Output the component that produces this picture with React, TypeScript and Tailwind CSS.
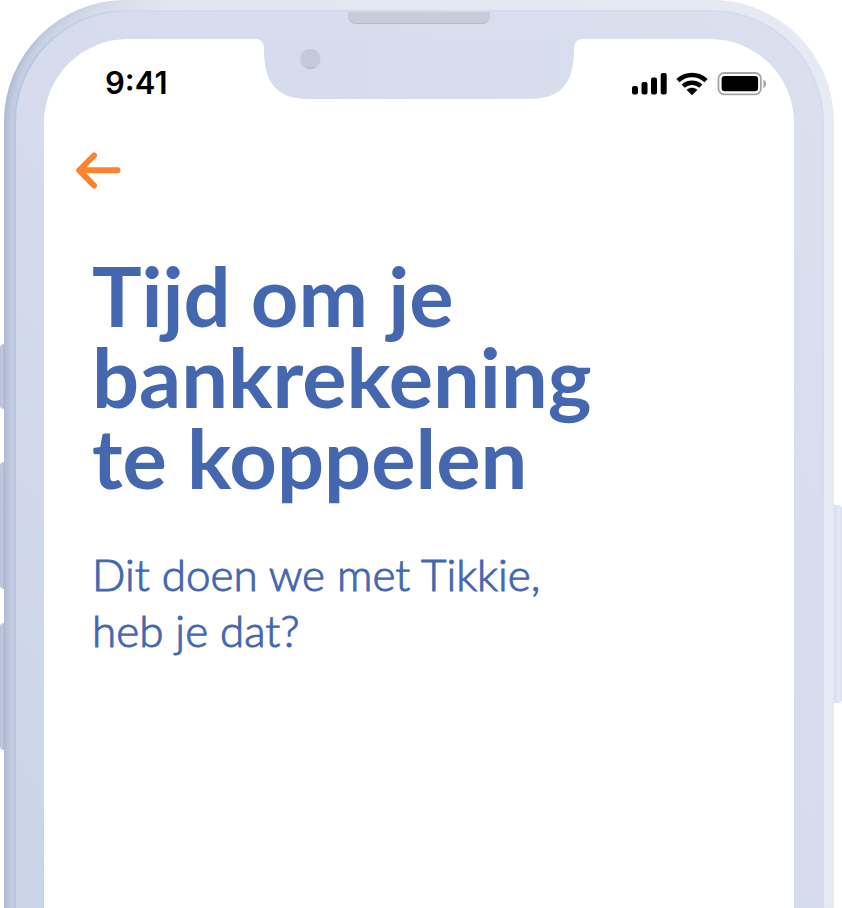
function StatusBar() {
  return (
    <div className="grid grid-cols-[1fr_322px_1fr] items-start">
      <span className="mt-7 pl-[61px] font-['Inter',sans-serif] text-[31px] leading-8 font-semibold text-black">
        9:41
      </span>
      <Notch />
      <div className="mt-[33px] flex items-center justify-end gap-2 pr-7">
        <SignalIcon />
        <WifiIcon />
        <BatteryIcon />
      </div>
    </div>
  );
}

function Notch() {
  return (
    <svg viewBox="0 0 322 60" className="block h-[60px] w-full" aria-hidden="true">
      <defs>
        <linearGradient id="notch" x1="0" y1="0" x2="1" y2="0">
          <stop offset="0" stopColor="#d6dbed" />
          <stop offset="0.5" stopColor="#d7dded" />
          <stop offset="1" stopColor="#d7deee" />
        </linearGradient>
        <linearGradient id="camera" x1="0" y1="0" x2="0" y2="1">
          <stop offset="0" stopColor="#c3c8d9" />
          <stop offset="0.85" stopColor="#c5cadb" />
          <stop offset="1" stopColor="#b4b9cb" />
        </linearGradient>
      </defs>
      <path
        d="M-4 0H326C318 0 316 4 316 11C316 40 306 60 272 60H50C16 60 6 40 6 11C6 4 4 0-4 0Z"
        fill="url(#notch)"
      />
      <circle cx="52.3" cy="20" r="10.3" fill="url(#camera)" />
    </svg>
  );
}

function SignalIcon() {
  return (
    <svg width="36" height="24" viewBox="0 0 36 24" aria-label="Signaal">
      <rect x="0" y="14" width="6" height="8.5" rx="2" />
      <rect x="9.5" y="10" width="6" height="12.5" rx="2" />
      <rect x="19" y="5.5" width="6" height="17" rx="2" />
      <rect x="28.7" y="1" width="6" height="21.5" rx="2" />
    </svg>
  );
}

function WifiIcon() {
  return (
    <svg width="32" height="24" viewBox="0 0 32 24" aria-label="Wifi">
      <g fill="none" stroke="#000" strokeWidth="4.4">
        <path d="M1.9 8.7C9.8 1 22.2 1 30.1 8.7" />
        <path d="M7.2 14.2C12.1 9.5 19.9 9.5 24.8 14.2" />
      </g>
      <path d="M10.9 17.9C13.8 15.4 18.2 15.4 21.1 17.9L16 23Z" stroke="#000" strokeWidth="0.5" strokeLinejoin="round" />
    </svg>
  );
}

function BatteryIcon() {
  return (
    <svg width="50" height="24" viewBox="0 0 50 24" aria-label="Batterij vol">
      <rect x="2.5" y="1" width="42.4" height="21.3" rx="5.5" fill="none" stroke="#a6a6a6" strokeWidth="1.8" />
      <rect x="5.6" y="4" width="36.5" height="15.3" rx="3.2" />
      <path d="M47.4 7.5C51 9.5 51 14 47.4 16Z" fill="#a6a6a6" />
    </svg>
  );
}

function SideButtons() {
  const left =
    "absolute right-full w-1 rounded-l-sm bg-linear-to-r from-[#b3bed7] via-[#c6cfe2] to-[#a6b4d3]";
  return (
    <div aria-hidden="true">
      <div className={`${left} top-[344px] h-[65px]`} />
      <div className={`${left} top-[462px] h-[127px]`} />
      <div className={`${left} top-[623px] h-[127px]`} />
      <div className="absolute top-[505px] left-full h-[198px] w-2 rounded-r-sm bg-linear-to-r from-[#d7ddef] via-[#e4e8f4] to-[#dce2f1]" />
    </div>
  );
}

export default function App() {
  return (
    <div className="flex min-h-screen overflow-hidden bg-white pr-2 pl-1">
      <div className="relative flex flex-1 rounded-t-[122px] bg-linear-to-r from-[#c4cde0] via-[#e2e6f1] via-20% to-[#e7eaf5] px-[10px] pt-[10px] shadow-[inset_11px_0_8px_-8px_#a9b4d0]">
        <SideButtons />
        <div className="flex flex-1 rounded-t-[112px] bg-linear-to-r from-[#b8c5e0] via-[#d3d8ea] via-15% to-[#d6dcec] px-0.5 pt-0.5">
          <div className="relative flex flex-1 rounded-t-[110px] bg-linear-to-tr from-[#cbd4e8] via-[#d6dced] to-[#dae0ee] px-7 pt-[27px]">
            <div
              aria-hidden="true"
              className="absolute top-0 left-1/2 h-3 w-[142px] -translate-x-1/2 rounded-b-lg border-b border-[#b6bbcc] bg-[#c7ccdb]"
            />
            <main className="flex-1 rounded-t-[84px] bg-white font-['Lato','Open_Sans',sans-serif] text-[#4467b0]">
              <StatusBar />
              <div className="px-8 pt-[52px]">
                <button type="button" aria-label="Terug" className="block">
                  <svg
                    width="46"
                    height="38"
                    viewBox="0 0 46 38"
                    fill="none"
                    stroke="#ff832b"
                    strokeWidth="6"
                    strokeLinecap="round"
                    strokeLinejoin="round"
                  >
                    <path d="M18 4.5L3.3 19.3L18 34.5M3.3 19.3H41.5" />
                  </svg>
                </button>
              </div>
              <div className="px-12 pt-[66px]">
                <h1 className="text-[83px] leading-[81px] font-bold">
                  Tijd om je
                  <br />
                  bankrekening
                  <br />
                  te koppelen
                </h1>
                <p className="mt-12 text-[44px] leading-14 font-light [-webkit-text-stroke:1px_#4467b0]">
                  Dit doen we met Tikkie,
                  <br />
                  heb je dat?
                </p>
              </div>
            </main>
          </div>
        </div>
      </div>
    </div>
  );
}
